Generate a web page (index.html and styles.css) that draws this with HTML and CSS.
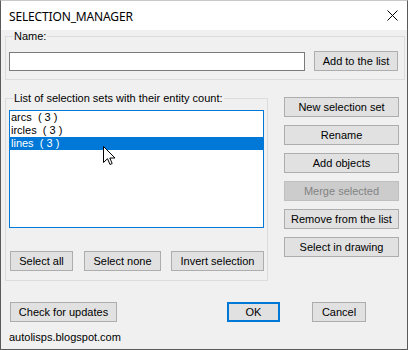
FILE: index.html
```html
<!DOCTYPE html>
<html lang="en">
<head>
  <meta charset="UTF-8" />
  <title>SELECTION_MANAGER</title>
  <link rel="stylesheet" href="styles.css">
</head>
<body>
  <div class="window">
    <div class="titlebar">
      <span class="title">SELECTION_MANAGER</span>
      <button class="close" aria-label="Close">
        <svg width="11" height="11" viewBox="0 0 11 11"><path d="M0.5 0.5L10.5 10.5M10.5 0.5L0.5 10.5" stroke="#000" stroke-width="1"/></svg>
      </button>
    </div>

    <div class="client">
      <div class="group name-group">
        <span class="legend">Name:</span>
        <div class="name-row">
          <input type="text" class="name-input" />
          <button class="btn add-btn">Add to the list</button>
        </div>
      </div>

      <div class="middle">
        <div class="group list-group">
          <span class="legend">List of selection sets with their entity count:</span>
          <ul class="listbox">
            <li>arcs  ( 3 )</li>
            <li>ircles  ( 3 )</li>
            <li class="selected">lines  ( 3 )</li>
          </ul>
          <div class="list-actions">
            <button class="btn w-all">Select all</button>
            <button class="btn w-none">Select none</button>
            <button class="btn w-invert">Invert selection</button>
          </div>
          <svg class="cursor" width="13" height="20" viewBox="0 0 13 20">
            <path d="M0.5 0.5L0.5 16.5L4.5 12.7L7 18.5L9.2 17.5L6.8 12L12 12Z" fill="#fff" stroke="#000" stroke-width="1" stroke-linejoin="miter"/>
          </svg>
        </div>

        <div class="side">
          <button class="btn">New selection set</button>
          <button class="btn">Rename</button>
          <button class="btn">Add objects</button>
          <button class="btn" disabled>Merge selected</button>
          <button class="btn">Remove from the list</button>
          <button class="btn">Select in drawing</button>
        </div>
      </div>

      <div class="footer">
        <button class="btn w-check">Check for updates</button>
        <button class="btn default w-ok">OK</button>
        <button class="btn w-cancel">Cancel</button>
      </div>
      <div class="site">autolisps.blogspot.com</div>
    </div>
  </div>
</body>
</html>
```

FILE: styles.css
```css
*,*::before,*::after{box-sizing:border-box;margin:0;padding:0}
body{font-family:'Liberation Sans',Arial,sans-serif;font-size:11px;color:#000;background:#f0f0f0}

.window{width:408px;height:350px;border:1px solid #5a5a5a;border-top-color:#c8c8c8;background:#f0f0f0;display:flex;flex-direction:column;overflow:hidden}
.titlebar{height:29px;background:#fff;display:flex;align-items:center;justify-content:space-between;padding-left:8px}
.title{font-family:'Noto Sans','Open Sans',sans-serif;font-size:12px;letter-spacing:-.15px;margin-top:1px}
.close{width:30px;height:29px;border:none;background:transparent;display:flex;align-items:center;justify-content:center}

.client{flex:1;display:flex;flex-direction:column}

.group{border:1px solid #dcdcdc;position:relative}
.legend{display:block;align-self:flex-start;height:13px;line-height:13px;margin:-7px 0 0 7px;padding:0 1px;background:#f0f0f0;width:max-content}

.name-group{width:400px;height:44px;margin:6px 0 0 4px}
.name-row{display:flex;align-items:flex-start;margin:9px 0 0 3px}
.name-input{width:296px;height:19px;border:1px solid #7a7a7a;background:#fff;font:inherit;outline:none}
.add-btn{width:84px;margin:-1px 0 0 9px}

.btn{height:20px;border:1px solid #adadad;background:#e1e1e1;font:inherit;color:#000;cursor:default;white-space:nowrap}
.btn[disabled]{background:#cccccc;border-color:#bfbfbf;color:#838383}
.btn.default{border:2px solid #0078d7}

.middle{display:flex;align-items:flex-start;margin-top:18px}
.list-group{width:263px;height:183px;margin-left:4px;display:flex;flex-direction:column}
.listbox{list-style:none;width:255px;height:118px;margin:5px 0 0 3px;border:1px solid #0078d7;background:#fff}
.listbox li{height:13px;line-height:13px;padding-left:1px;white-space:pre}
.listbox li.selected{background:#0078d7;color:#fff}
.list-actions{display:flex;gap:10px;margin:23px 0 0 4px}
.w-all{width:63px}
.w-none{width:77px;margin-left:1px}
.w-invert{width:93px}
.cursor{position:absolute;left:97px;top:47px}

.side{display:flex;flex-direction:column;gap:8px;width:115px;margin:-1px 0 0 16px}

.footer{display:flex;margin:21px 0 0 9px}
.w-check{width:107px}
.w-ok{width:53px;margin-left:110px}
.w-cancel{width:54px;margin-left:32px}
.site{margin:9px 0 0 8px;line-height:13px}
```
